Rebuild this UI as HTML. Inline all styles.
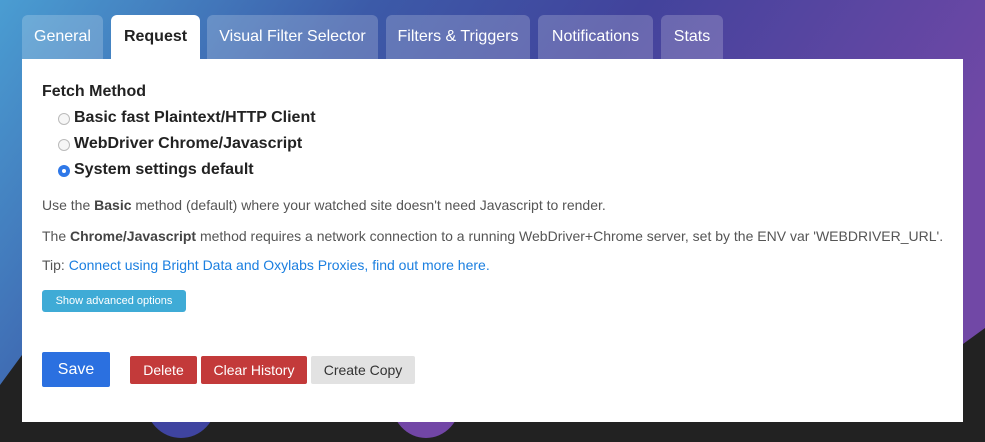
<!DOCTYPE html>
<html><head><style>
*{box-sizing:border-box;margin:0;padding:0}
body{width:985px;height:442px;overflow:hidden;position:relative;font-family:"Liberation Sans",Arial,sans-serif;background:#222}
svg.bg{position:absolute;left:0;top:0}
.tab{position:absolute;top:15px;height:44px;border-radius:6px 6px 0 0;background:rgba(255,255,255,0.2);color:#fff;font-size:16px;line-height:44px;text-align:center}
.tab.a{background:#fff;color:#222;font-weight:bold}
.panel{position:absolute;left:22px;top:59px;width:941px;height:363px;background:#fff}
.t{position:absolute;white-space:nowrap}
.h{font-size:16px;font-weight:bold;color:#222}
.p{font-size:14px;color:#555}
.p b{color:#444}
.radio{position:absolute;width:12px;height:12px;border-radius:50%;border:1px solid #bbb;background:#f6f6f6}
.radio.on{border:none;background:#2f78e8}
.radio.on:after{content:"";position:absolute;left:4px;top:4px;width:4px;height:4px;border-radius:50%;background:#fff}
.btn{position:absolute;color:#fff;text-align:center;border-radius:2px}
</style></head><body>
<svg class="bg" width="985" height="442">
<defs><linearGradient id="g" x1="0" y1="0" x2="1" y2="0.3">
<stop offset="0" stop-color="#4a9dd2"/><stop offset="0.35" stop-color="#3c5aa8"/><stop offset="0.6" stop-color="#42439c"/><stop offset="1" stop-color="#7148a6"/></linearGradient></defs>
<rect width="985" height="442" fill="#222"/>
<polygon points="0,0 985,0 985,328 963,344 963,422 22,422 22,355 0,385" fill="url(#g)"/>
<ellipse cx="181" cy="400" rx="36" ry="38" fill="#3f44a0"/>
<ellipse cx="426" cy="400" rx="35" ry="38" fill="#7246a6"/>
</svg>
<div class="tab" style="left:22px;width:81px">General</div>
<div class="tab a" style="left:111px;width:89px">Request</div>
<div class="tab" style="left:207px;width:171px">Visual Filter Selector</div>
<div class="tab" style="left:386px;width:144px">Filters &amp; Triggers</div>
<div class="tab" style="left:538px;width:115px">Notifications</div>
<div class="tab" style="left:661px;width:62px">Stats</div>
<div class="panel">
<div class="t h" style="left:20px;top:24px">Fetch Method</div>
<div class="radio" style="left:36px;top:54px"></div>
<div class="t h" style="left:52px;top:50px">Basic fast Plaintext/HTTP Client</div>
<div class="radio" style="left:36px;top:80px"></div>
<div class="t h" style="left:52px;top:76px">WebDriver Chrome/Javascript</div>
<div class="radio on" style="left:36px;top:106px"></div>
<div class="t h" style="left:52px;top:102px">System settings default</div>
<div class="t p" style="left:20px;top:138px">Use the <b>Basic</b> method (default) where your watched site doesn't need Javascript to render.</div>
<div class="t p" style="left:20px;top:169px">The <b>Chrome/Javascript</b> method requires a network connection to a running WebDriver+Chrome server, set by the ENV var 'WEBDRIVER_URL'.</div>
<div class="t p" style="left:20px;top:198px">Tip: <span style="color:#1b7fe0">Connect using Bright Data and Oxylabs Proxies, find out more here.</span></div>
<div class="btn" style="left:20px;top:231px;width:144px;height:22px;background:#3fabd6;font-size:11px;line-height:22px;border-radius:3px">Show advanced options</div>
<div class="btn" style="left:20px;top:293px;width:68px;height:35px;background:#2b70e0;font-size:16px;line-height:35px">Save</div>
<div class="btn" style="left:108px;top:297px;width:67px;height:28px;background:#c33a3a;font-size:14px;line-height:28px">Delete</div>
<div class="btn" style="left:179px;top:297px;width:106px;height:28px;background:#c33a3a;font-size:14px;line-height:28px">Clear History</div>
<div class="btn" style="left:289px;top:297px;width:104px;height:28px;background:#e2e2e2;color:#333;font-size:14px;line-height:28px">Create Copy</div>
</div>
</body></html>
